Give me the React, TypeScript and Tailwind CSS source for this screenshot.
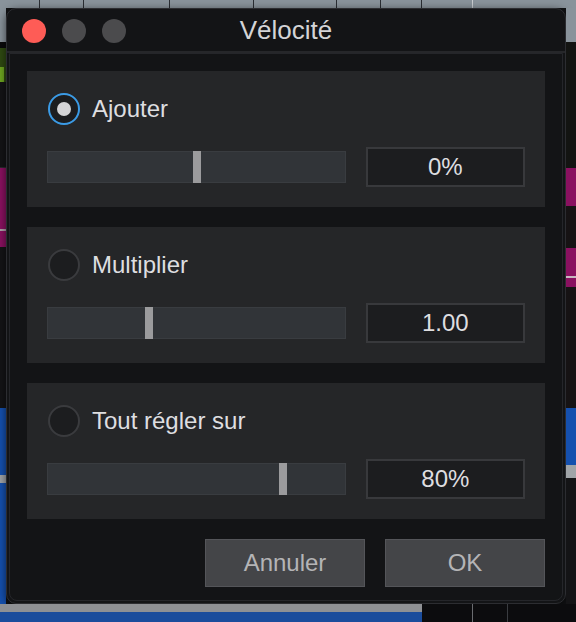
import React from 'react';

type Mode = 'add' | 'multiply' | 'set';

interface VelocityRowProps {
    label: string;
    value: string;
    thumbLeft: number;
    selected: boolean;
}

const FONT = { fontFamily: '"Liberation Sans", Arial, sans-serif' };

/**
 * Radio - round selector, blue ring when checked.
 */
function Radio({ checked }: { checked: boolean }) {
    return (
        <div
            className={`flex h-8 w-8 shrink-0 items-center justify-center rounded-full border-2 bg-[#1c1d1f] ${
                checked ? 'border-[#3b9be6]' : 'border-[#3a3b3e]'
            }`}
        >
            {checked && <div className="h-[14px] w-[14px] rounded-full bg-[#d4d4d6]" />}
        </div>
    );
}

/**
 * VelocityRow - option panel with a radio, a slider and a value field.
 */
function VelocityRow({ label, value, thumbLeft, selected }: VelocityRowProps) {
    return (
        <div className="flex h-[136px] flex-col bg-[#252628] px-5 pt-[22px]">
            <div className="flex items-center gap-[12px] pl-[1px]">
                <Radio checked={selected} />
                <span className="text-[24px] leading-none text-[#dedee0]">{label}</span>
            </div>
            <div className="mt-[22px] flex items-center gap-5">
                <div className="relative h-8 w-[300px] border border-[#393c40] bg-[#313438]">
                    {/* slider thumb */}
                    <div
                        className="absolute top-[-1px] h-8 w-2 bg-[#9b9b9d]"
                        style={{ left: thumbLeft }}
                    />
                </div>
                <div className="flex h-10 w-[160px] items-center justify-center border-2 border-[#38393c] bg-[#1c1d1f] text-[24px] text-[#dedee0]">
                    {value}
                </div>
            </div>
        </div>
    );
}

/**
 * Track columns peeking out on each side of the dialog.
 */
function LeftEdge() {
    return (
        <div className="flex w-[6px] flex-col">
            <div className="h-[34px] bg-[#89939b]" />
            <div className="h-[6px] bg-[#0a0a0b]" />
            <div className="flex h-[34px] flex-col justify-end bg-[#2f4a12]">
                <div className="h-[15px] w-[4px] bg-[#6da520]" />
            </div>
            <div className="h-[86px] border-b border-[#2a2b2e] bg-[#141416]" />
            <div className="flex h-[79px] flex-col bg-[#8a1160] pt-[61px]">
                <div className="h-[2px] bg-[#b0a0aa]" />
            </div>
            <div className="h-[161px] bg-[#141416]" />
            <div className="flex flex-1 flex-col bg-[#1550ae] pt-[67px]">
                <div className="h-[8px] bg-[#a0a4a8]" />
            </div>
        </div>
    );
}

function RightEdge() {
    return (
        <div className="flex w-[10px] flex-col">
            <div className="h-[34px] bg-[#89939b]" />
            <div className="h-[126px] bg-[#131412]" />
            <div className="h-[38px] bg-[#8a1160]" />
            <div className="h-[42px] bg-[#161314]" />
            <div className="flex h-[39px] flex-col bg-[#8a1160] pt-[28px]">
                <div className="h-[2px] bg-[#c8b8c0]" />
            </div>
            <div className="h-[121px] bg-[#161314]" />
            <div className="flex h-[70px] flex-col justify-end bg-[#1550ae]">
                <div className="h-[13px] bg-[#a0a4a8]" />
            </div>
            <div className="flex-1 bg-[#141416]" />
        </div>
    );
}

export default function App() {
    const mode: Mode = 'add';

    return (
        <div className="flex h-[622px] w-[576px] flex-col overflow-hidden bg-[#111214]" style={FONT}>
            {/* ruler strip */}
            <div className="flex h-[8px] bg-[#89939b]">
                {[40, 44, 86, 84, 83, 44, 41].map((w, i) => (
                    <div key={i} className="border-r border-[#2a2e33]" style={{ width: w }} />
                ))}
                <div className="w-[51px] border-r border-[#c8ccd0]" />
                <div className="flex-1" />
            </div>

            <div className="flex h-[596px]">
                <LeftEdge />

                {/* dialog window */}
                <div className="flex w-[560px] flex-col rounded-[10px] border border-[#2c2d31] bg-[#131416] shadow-[0_2px_8px_rgba(0,0,0,0.6)]">
                    <div className="relative flex h-[44px] items-center justify-center border-b-2 border-[#26272a]">
                        <div className="absolute left-[15px] top-[10px] flex gap-4">
                            <div className="h-6 w-6 rounded-full bg-[#fe5c56]" />
                            <div className="h-6 w-6 rounded-full bg-[#4b4b4d]" />
                            <div className="h-6 w-6 rounded-full bg-[#4b4b4d]" />
                        </div>
                        <span className="text-[26px] leading-none text-[#d4d4d6]">Vélocité</span>
                    </div>

                    <div className="mx-[2px] mb-[2px] flex flex-1 flex-col gap-5 rounded-b-[8px] border border-[#25262a] px-[17px] pt-[17px]">
                        <VelocityRow label="Ajouter" value="0%" thumbLeft={145} selected={mode === 'add'} />
                        <VelocityRow label="Multiplier" value="1.00" thumbLeft={97} selected={false} />
                        <VelocityRow label="Tout régler sur" value="80%" thumbLeft={231} selected={false} />

                        <div className="flex justify-end gap-5">
                            <button className="h-12 w-[160px] border border-[#545559] bg-[#444548] text-[24px] text-[#b4b4b6]">
                                Annuler
                            </button>
                            <button className="h-12 w-[160px] border border-[#545559] bg-[#444548] text-[24px] text-[#b4b4b6]">
                                OK
                            </button>
                        </div>
                    </div>
                </div>

                <RightEdge />
            </div>

            {/* clip lane below */}
            <div className="flex flex-1">
                <div className="flex w-[422px] flex-col">
                    <div className="h-[8px] bg-[#8e9094]" />
                    <div className="flex-1 bg-[#1a4c9c]" />
                </div>
                <div className="flex flex-1 bg-[#0c0c0e]">
                    <div className="w-[51px] border-r border-[#6a6c70]" />
                    <div className="w-[35px] border-r border-[#3a3c40]" />
                </div>
            </div>
        </div>
    );
}
